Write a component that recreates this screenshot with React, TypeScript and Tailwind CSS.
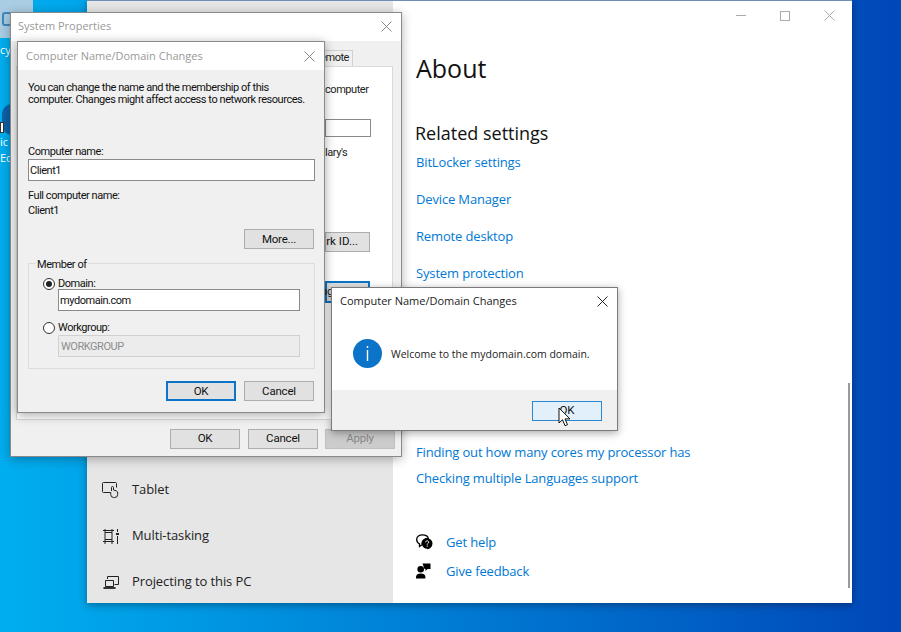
const sans = "font-['Open_Sans','Liberation_Sans',sans-serif]";
const tight = "font-['Roboto','Liberation_Sans',sans-serif] text-[11px] tracking-[-0.45px]";

function WinButton({ label, className = "" }: { label: string; className?: string }) {
  return (
    <div
      className={`flex h-[20px] w-[70px] items-center justify-center border border-[#adadad] bg-[#e1e1e1] font-['Roboto',sans-serif] text-[11.500px] tracking-[-0.2px] text-[#111] ${className}`}
    >
      {label}
    </div>
  );
}

function CloseIcon({ color = "#777" }: { color?: string }) {
  return (
    <svg width="11" height="11" viewBox="0 0 11 11" fill="none" stroke={color} strokeWidth="1">
      <path d="M0.5 0.5l10 10M10.5 0.5l-10 10" />
    </svg>
  );
}

function Radio({ checked }: { checked?: boolean }) {
  return (
    <div className="flex h-[12px] w-[12px] items-center justify-center rounded-full border border-[#333] bg-white">
      {checked && <div className="h-[6px] w-[6px] rounded-full bg-[#222]" />}
    </div>
  );
}

function TabletIcon() {
  return (
    <svg width="17" height="16" viewBox="0 0 17 16" fill="none" stroke="#222" strokeWidth="1">
      <path d="M8 10.500H1.500a1 1 0 0 1-1-1v-8a1 1 0 0 1 1-1h12a1 1 0 0 1 1 1v4" />
      <path d="M9.500 9V5.500a1 1 0 0 1 2 0V8l3 1a2 2 0 0 1 1.200 2v1.500a3 3 0 0 1-3 3h-1a3 3 0 0 1-3-3V10" />
    </svg>
  );
}

function MultitaskIcon() {
  return (
    <svg width="16" height="15" viewBox="0 0 16 15" fill="none" stroke="#222" strokeWidth="1">
      <path d="M0 1.500h11M0 12.500h11M2 3.500h7v7H2zM14.500 0v3M14.500 7v8" />
      <path d="M2 0v3.500M9 0v3.500M2 10.500V15M9 10.500V15" />
      <rect x="13" y="4" width="3" height="2" fill="#222" stroke="none" />
    </svg>
  );
}

function ProjectIcon() {
  return (
    <svg width="16" height="13" viewBox="0 0 16 13" fill="none" stroke="#222" strokeWidth="1">
      <path d="M4.500 3V0.500h11v8h-4" />
      <path d="M2.500 4.500h8v6h-8zM0 12h13" />
      <rect x="1" y="11" width="11" height="2" fill="#333" stroke="none" />
    </svg>
  );
}

function HelpIcon() {
  return (
    <svg width="17" height="16" viewBox="0 0 17 16">
      <path d="M6.500 0.800c3.200 0 5.800 1.700 5.800 3.700-3.300 0-6.300 1.800-6.300 4.700 0 .5.100.9.200 1.300L3.500 12.500V9.800C1.500 8.900.7 7 .7 5.200.7 2.700 3.300.8 6.500.8z" fill="none" stroke="#000" strokeWidth="1.300" />
      <circle cx="11.200" cy="9.500" r="5.300" fill="#000" />
      <path d="M11.500 15.500l3.500-2-3.300-.5z" fill="#000" />
      <path d="M9.700 8.300c0-2 3-2 3 0 0 1.200-1.500 1-1.500 2.300" fill="none" stroke="#fff" strokeWidth="1" />
      <circle cx="11.200" cy="12.100" r=".7" fill="#fff" />
    </svg>
  );
}

function FeedbackIcon() {
  return (
    <svg width="15" height="16" viewBox="0 0 15 16" fill="#000">
      <circle cx="4.700" cy="6.300" r="3.300" />
      <path d="M0 15.500v-1.500c0-2.400 2-3.500 4.700-3.500s4.700 1.100 4.700 3.500v1.500z" />
      <path d="M6.500 0.500h8v5.500h-3l-2 2V6h-1z" />
    </svg>
  );
}

function Link({ children, className = "" }: { children: string; className?: string }) {
  return (
    <div className={`text-[13px] leading-[18px] tracking-[-0.15px] text-[#0078d4] ${className}`}>{children}</div>
  );
}

function NavItem({ icon, label }: { icon: React.ReactNode; label: string }) {
  return (
    <div className="flex h-[46px] items-center">
      <div className="flex w-[45px] justify-center pl-[2px]">{icon}</div>
      <div className="text-[13px] tracking-[-0.1px] text-[#222]">{label}</div>
    </div>
  );
}

function SettingsWindow() {
  return (
    <div className="absolute left-[87px] top-0 flex h-[603px] w-[765px] border-t border-[#6f8fb5] shadow-[0_2px_8px_rgba(0,0,0,0.35)]">
      <div className="flex w-[306px] flex-col justify-end bg-[#e6e6e6]">
        <NavItem icon={<TabletIcon />} label="Tablet" />
        <NavItem icon={<MultitaskIcon />} label="Multi-tasking" />
        <div className="-mb-[2px]">
          <NavItem icon={<ProjectIcon />} label="Projecting to this PC" />
        </div>
      </div>
      <div className="relative flex-1 bg-white pl-[22px]">
        <div className="ml-[1px] mt-[48px] text-[25px] leading-[38px] text-[#111]">About</div>
        <div className="mt-[33px] text-[18px] leading-[26px] text-[#111]">Related settings</div>
        <div className="ml-[1px] mt-[7px] flex flex-col gap-[19px]">
          <Link>BitLocker settings</Link>
          <Link>Device Manager</Link>
          <Link>Remote desktop</Link>
          <Link>System protection</Link>
        </div>
        <div className="ml-[1px] mt-[161px] flex flex-col gap-[8px]">
          <Link>Finding out how many cores my processor has</Link>
          <Link>Checking multiple Languages support</Link>
        </div>
        <div className="ml-[1px] mt-[46px] flex flex-col gap-[11px]">
          <div className="flex items-center gap-[13px]">
            <HelpIcon />
            <Link>Get help</Link>
          </div>
          <div className="flex items-center gap-[15px]">
            <FeedbackIcon />
            <Link>Give feedback</Link>
          </div>
        </div>
        <div className="absolute right-[17px] top-[9px] flex items-center gap-[34px]">
          <div className="h-px w-[10px] bg-[#aaa]" />
          <div className="h-[10px] w-[10px] border border-[#aaa]" />
          <CloseIcon color="#aaa" />
        </div>
        <div className="absolute bottom-[15px] right-[2px] h-[205px] w-[2px] bg-[#9a9a9a]" />
      </div>
    </div>
  );
}

function SystemProperties() {
  return (
    <div className="absolute left-[10px] top-[12px] h-[445px] w-[392px] border border-[#8a8a8a] bg-[#f0f0f0] shadow-[0_2px_10px_rgba(0,0,0,0.3)]">
      <div className="flex h-[28px] items-center justify-between bg-white pb-[1px] pl-[7px] pr-[9px] text-[11px] text-[#999]">
        <span>System Properties</span>
        <CloseIcon color="#888" />
      </div>
      <div className="relative ml-[5px] mr-[8px] h-[384px] pt-[25px]">
        <div className={`absolute left-[295px] top-[9px] flex h-[17px] w-[42px] items-center justify-end border border-[#d0d0d0] bg-[#f0f0f0] pr-[3px] ${tight} text-[#222]`}>
          emote
        </div>
        <div className={`relative h-[354px] border border-[#d9d9d9] bg-white text-[#222] ${tight}`}>
          <div className="absolute left-[308px] top-[15px]">computer</div>
          <div className="absolute left-[308px] top-[52px] h-[18px] w-[46px] border border-[#8a8a8a] bg-white" />
          <div className="absolute left-[308px] top-[78px]">lary's</div>
          <div className="absolute left-[308px] top-[165px] flex h-[20px] w-[45px] items-center justify-end whitespace-nowrap border border-[#adadad] bg-[#e1e1e1] pr-[11px] text-[11.500px] tracking-[0px] text-[#111]">
            rk ID...
          </div>
          <div className="absolute left-[308px] top-[214px] flex h-[22px] w-[45px] items-center justify-end border-2 border-[#0b74c8] bg-[#e1e1e1] pr-[35px] text-[11.500px]">
            ng
          </div>
        </div>
      </div>
      <div className="mr-[6px] mt-[4px] flex justify-end gap-[8px]">
        <WinButton label="OK" />
        <WinButton label="Cancel" />
        <WinButton label="Apply" className="-ml-[1px] !border-[#bfbfbf] !bg-[#cccccc] !text-[#8a8a8a]" />
      </div>
    </div>
  );
}

function DomainChanges() {
  return (
    <div className="absolute left-[17px] top-[41px] h-[372px] w-[308px] border border-[#8a8a8a] bg-[#f0f0f0] text-[#111] shadow-[0_2px_10px_rgba(0,0,0,0.35)]">
      <div className="flex h-[28px] items-center justify-between bg-white pl-[8px] pr-[9px] text-[11px] text-[#999]">
        <span>Computer Name/Domain Changes</span>
        <CloseIcon color="#888" />
      </div>
      <div className={`px-[10px] leading-[13px] ${tight}`}>
        <p className="mt-[12px] whitespace-nowrap leading-[12px]">
          You can change the name and the membership of this
          <br />
          computer. Changes might affect access to network resources.
        </p>
        <div className="mt-[39px]">Computer name:</div>
        <div className="mt-[1px] flex h-[22px] w-[287px] items-center border border-[#8a8a8a] bg-white px-[1px]">
          Client1
        </div>
        <div className="mt-[8px]">Full computer name:</div>
        <div className="mt-[2px]">Client1</div>
        <div className="mt-[12px] flex w-[286px] justify-end">
          <WinButton label="More..." />
        </div>
        <div className="relative mt-[14px] h-[106px] w-[287px] border border-[#dcdcdc] pl-[14px] pt-[13px]">
          <div className="absolute -top-[6px] left-[7px] bg-[#f0f0f0] px-[1px]">Member of</div>
          <div className="flex items-center gap-[3px]">
            <Radio checked />
            <span>Domain:</span>
          </div>
          <div className="-mt-[1px] ml-[15px] flex h-[22px] w-[242px] items-center border border-[#8a8a8a] bg-white px-[1px]">
            mydomain.com
          </div>
          <div className="mt-[10px] flex items-center gap-[3px]">
            <Radio />
            <span>Workgroup:</span>
          </div>
          <div className="ml-[15px] mt-[1px] flex h-[22px] w-[242px] items-center border border-[#d0d0d0] bg-[#ececec] px-[2px] text-[#8c8c8c]">
            WORKGROUP
          </div>
        </div>
        <div className="mt-[12px] flex w-[286px] justify-end gap-[8px]">
          <WinButton label="OK" className="!border-2 !border-[#0b74c8]" />
          <WinButton label="Cancel" />
        </div>
      </div>
    </div>
  );
}

function MessageBox() {
  return (
    <div className="absolute left-[331px] top-[287px] flex h-[144px] w-[287px] flex-col border border-[#7a7a7a] bg-white shadow-[0_2px_8px_rgba(0,0,0,0.35)]">
      <div className="flex h-[28px] items-center justify-between pb-[1px] pl-[8px] pr-[9px] text-[11px] text-[#222]">
        <span>Computer Name/Domain Changes</span>
        <CloseIcon color="#222" />
      </div>
      <div className="flex h-[74px] items-center gap-[9px] pl-[21px] text-[10.500px] text-[#222]">
        <div className="flex h-[29px] w-[29px] items-center justify-center rounded-full bg-[#0b74c8]">
          <svg width="3" height="15" viewBox="0 0 3 15" fill="#fff">
            <rect x="0.800" y="0" width="1.400" height="2" />
            <rect x="0.800" y="4" width="1.400" height="11" />
          </svg>
        </div>
        <span className="mt-[3px]">Welcome to the mydomain.com domain.</span>
      </div>
      <div className="flex flex-1 items-center justify-end bg-[#f0f0f0] pr-[15px] pt-[1px]">
        <div className="relative flex h-[20px] w-[70px] items-center justify-center border border-[#2b87d0] bg-[#e1f0fa] font-['Roboto',sans-serif] text-[11.500px] text-[#111]">
          OK
          <svg className="absolute left-[25px] top-[5px]" width="13" height="20" viewBox="0 0 13 20">
            <path d="M1 1v15l3.500-3.300 2.500 6 2.500-1-2.500-5.800h5z" fill="#fff" stroke="#111" />
          </svg>
        </div>
      </div>
    </div>
  );
}

function DesktopIcons() {
  return (
    <>
      <div className="absolute left-0 top-0 flex h-[38px] w-[33px] items-center justify-start rounded-br-[4px] bg-[#a9cde3] pl-[2px]">
        <div className="h-[14px] w-[10px] rounded-[3px] border-2 border-[#3f87bb]" />
      </div>
      <div className="absolute left-0 top-[44px] text-[11px] leading-[12px] text-white">cy</div>
      <div className="absolute left-[2px] top-[104px] h-[31px] w-[20px] rounded-full bg-[#0e63a8]" />
      <div className="absolute left-0 top-[122px] h-[11px] w-[4px] border border-[#333] bg-white" />
      <div className="absolute left-0 top-[136px] text-[11px] leading-[12px] text-white">ic</div>
      <div className="absolute left-0 top-[152px] text-[11px] leading-[12px] text-white">Ec</div>
    </>
  );
}

export default function App() {
  return (
    <div
      className={`relative h-[632px] w-[901px] overflow-hidden bg-gradient-to-r from-[#00aeef] to-[#0047b8] ${sans}`}
    >
      <DesktopIcons />
      <SettingsWindow />
      <SystemProperties />
      <DomainChanges />
      <MessageBox />
    </div>
  );
}
